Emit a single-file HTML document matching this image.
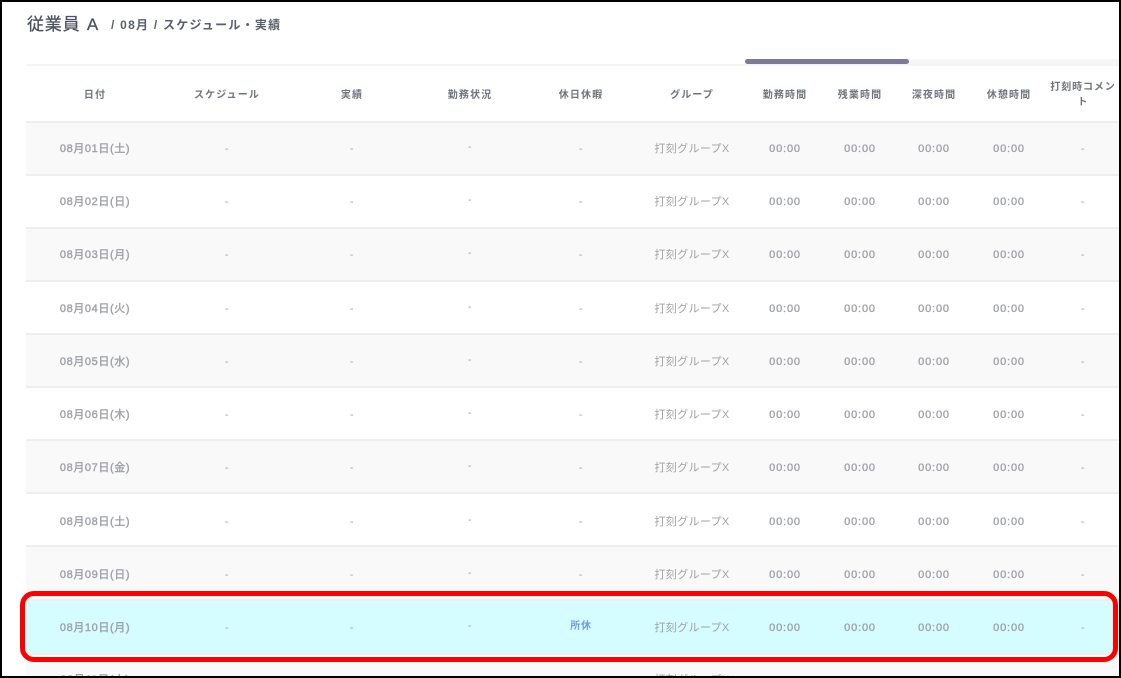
<!DOCTYPE html>
<html lang="ja">
<head>
<meta charset="utf-8">
<style>
html,body{margin:0;padding:0;background:#fff;}
#p{position:relative;width:1121px;height:678px;overflow:hidden;background:#fff;font-family:"Liberation Sans","Noto Sans CJK JP",sans-serif;}
#c{position:absolute;left:0;top:0;width:1121px;height:678px;overflow:hidden;filter:blur(.35px);}
.row{position:absolute;left:26px;width:1093px;height:51px;border-bottom:2px solid #eeeeee;}
.t{position:absolute;transform:translateX(-50%);white-space:nowrap;text-align:center;}
.h{font-size:10px;font-weight:700;color:#6f7480;letter-spacing:1.1px;line-height:14px;top:89px;}
.d{font-size:11px;color:#9fa2a7;line-height:14px;letter-spacing:.6px;margin-top:1px;}
.b{-webkit-text-stroke:.4px #9fa2a7;}
.g{letter-spacing:.35px;color:#a0a1a4;}
.m{letter-spacing:.85px;-webkit-text-stroke:.35px #9fa2a7;}
</style>
</head>
<body>
<div id="p">
<div id="c">
<div class="t" style="transform:none;top:14px;left:27px;font-size:17px;line-height:22px;color:#4c5160;letter-spacing:.8px;word-spacing:1px;-webkit-text-stroke:.25px #4c5160;">従業員 A</div>
<div class="t" style="transform:none;top:17px;left:111px;font-size:12px;line-height:16px;font-weight:700;color:#5a5f6c;letter-spacing:1.25px;">/ 08月 / スケジュール・実績</div>
<div style="position:absolute;left:26px;top:64px;width:1093px;height:2px;background:#f5f5f5;"></div>
<div style="position:absolute;left:745px;top:59px;width:374px;height:5px;background:#f6f6f6;"></div>
<div style="position:absolute;left:745px;top:59px;width:164px;height:5px;border-radius:3px;background:#7d7a99;"></div>
<div style="position:absolute;left:26px;top:121px;width:1093px;height:2px;background:#eeeeee;"></div>
<div class="t h" style="left:95px">日付</div>
<div class="t h" style="left:227px">スケジュール</div>
<div class="t h" style="left:352px">実績</div>
<div class="t h" style="left:470px">勤務状況</div>
<div class="t h" style="left:581px">休日休暇</div>
<div class="t h" style="left:692px">グループ</div>
<div class="t h" style="left:785px">勤務時間</div>
<div class="t h" style="left:860px">残業時間</div>
<div class="t h" style="left:934px">深夜時間</div>
<div class="t h" style="left:1009px">休憩時間</div>
<div class="t h" style="left:1083px;top:80px;width:68px;white-space:normal;line-height:15px;letter-spacing:.9px;">打刻時コメント</div>

<div class="row" style="top:123px;background:#f9f9f9"></div>
<div class="row" style="top:176px;background:#fff"></div>
<div class="row" style="top:229px;background:#f9f9f9"></div>
<div class="row" style="top:282px;background:#fff"></div>
<div class="row" style="top:335px;background:#f9f9f9"></div>
<div class="row" style="top:388px;background:#fff"></div>
<div class="row" style="top:441px;background:#f9f9f9"></div>
<div class="row" style="top:494px;background:#fff"></div>
<div class="row" style="top:547px;background:#f9f9f9;height:52px"></div>
<div class="row" style="top:601px;background:#d5fcff;height:52px"></div>

<div class="t d b" style="left:95px;top:141px">08月01日(土)</div><div class="t d" style="left:227px;top:141px">-</div><div class="t d" style="left:352px;top:141px">-</div><div class="t d" style="left:470px;top:139px">-</div><div class="t d" style="left:581px;top:141px">-</div><div class="t d g" style="left:692px;top:141px">打刻グループX</div><div class="t d m" style="left:785px;top:141px">00:00</div><div class="t d m" style="left:860px;top:141px">00:00</div><div class="t d m" style="left:934px;top:141px">00:00</div><div class="t d m" style="left:1009px;top:141px">00:00</div><div class="t d" style="left:1083px;top:141px">-</div>
<div class="t d b" style="left:95px;top:194px">08月02日(日)</div><div class="t d" style="left:227px;top:194px">-</div><div class="t d" style="left:352px;top:194px">-</div><div class="t d" style="left:470px;top:192px">-</div><div class="t d" style="left:581px;top:194px">-</div><div class="t d g" style="left:692px;top:194px">打刻グループX</div><div class="t d m" style="left:785px;top:194px">00:00</div><div class="t d m" style="left:860px;top:194px">00:00</div><div class="t d m" style="left:934px;top:194px">00:00</div><div class="t d m" style="left:1009px;top:194px">00:00</div><div class="t d" style="left:1083px;top:194px">-</div>
<div class="t d b" style="left:95px;top:247px">08月03日(月)</div><div class="t d" style="left:227px;top:247px">-</div><div class="t d" style="left:352px;top:247px">-</div><div class="t d" style="left:470px;top:245px">-</div><div class="t d" style="left:581px;top:247px">-</div><div class="t d g" style="left:692px;top:247px">打刻グループX</div><div class="t d m" style="left:785px;top:247px">00:00</div><div class="t d m" style="left:860px;top:247px">00:00</div><div class="t d m" style="left:934px;top:247px">00:00</div><div class="t d m" style="left:1009px;top:247px">00:00</div><div class="t d" style="left:1083px;top:247px">-</div>
<div class="t d b" style="left:95px;top:301px">08月04日(火)</div><div class="t d" style="left:227px;top:301px">-</div><div class="t d" style="left:352px;top:301px">-</div><div class="t d" style="left:470px;top:299px">-</div><div class="t d" style="left:581px;top:301px">-</div><div class="t d g" style="left:692px;top:301px">打刻グループX</div><div class="t d m" style="left:785px;top:301px">00:00</div><div class="t d m" style="left:860px;top:301px">00:00</div><div class="t d m" style="left:934px;top:301px">00:00</div><div class="t d m" style="left:1009px;top:301px">00:00</div><div class="t d" style="left:1083px;top:301px">-</div>
<div class="t d b" style="left:95px;top:354px">08月05日(水)</div><div class="t d" style="left:227px;top:354px">-</div><div class="t d" style="left:352px;top:354px">-</div><div class="t d" style="left:470px;top:352px">-</div><div class="t d" style="left:581px;top:354px">-</div><div class="t d g" style="left:692px;top:354px">打刻グループX</div><div class="t d m" style="left:785px;top:354px">00:00</div><div class="t d m" style="left:860px;top:354px">00:00</div><div class="t d m" style="left:934px;top:354px">00:00</div><div class="t d m" style="left:1009px;top:354px">00:00</div><div class="t d" style="left:1083px;top:354px">-</div>
<div class="t d b" style="left:95px;top:407px">08月06日(木)</div><div class="t d" style="left:227px;top:407px">-</div><div class="t d" style="left:352px;top:407px">-</div><div class="t d" style="left:470px;top:405px">-</div><div class="t d" style="left:581px;top:407px">-</div><div class="t d g" style="left:692px;top:407px">打刻グループX</div><div class="t d m" style="left:785px;top:407px">00:00</div><div class="t d m" style="left:860px;top:407px">00:00</div><div class="t d m" style="left:934px;top:407px">00:00</div><div class="t d m" style="left:1009px;top:407px">00:00</div><div class="t d" style="left:1083px;top:407px">-</div>
<div class="t d b" style="left:95px;top:460px">08月07日(金)</div><div class="t d" style="left:227px;top:460px">-</div><div class="t d" style="left:352px;top:460px">-</div><div class="t d" style="left:470px;top:458px">-</div><div class="t d" style="left:581px;top:460px">-</div><div class="t d g" style="left:692px;top:460px">打刻グループX</div><div class="t d m" style="left:785px;top:460px">00:00</div><div class="t d m" style="left:860px;top:460px">00:00</div><div class="t d m" style="left:934px;top:460px">00:00</div><div class="t d m" style="left:1009px;top:460px">00:00</div><div class="t d" style="left:1083px;top:460px">-</div>
<div class="t d b" style="left:95px;top:514px">08月08日(土)</div><div class="t d" style="left:227px;top:514px">-</div><div class="t d" style="left:352px;top:514px">-</div><div class="t d" style="left:470px;top:512px">-</div><div class="t d" style="left:581px;top:514px">-</div><div class="t d g" style="left:692px;top:514px">打刻グループX</div><div class="t d m" style="left:785px;top:514px">00:00</div><div class="t d m" style="left:860px;top:514px">00:00</div><div class="t d m" style="left:934px;top:514px">00:00</div><div class="t d m" style="left:1009px;top:514px">00:00</div><div class="t d" style="left:1083px;top:514px">-</div>
<div class="t d b" style="left:95px;top:567px">08月09日(日)</div><div class="t d" style="left:227px;top:567px">-</div><div class="t d" style="left:352px;top:567px">-</div><div class="t d" style="left:470px;top:565px">-</div><div class="t d" style="left:581px;top:567px">-</div><div class="t d g" style="left:692px;top:567px">打刻グループX</div><div class="t d m" style="left:785px;top:567px">00:00</div><div class="t d m" style="left:860px;top:567px">00:00</div><div class="t d m" style="left:934px;top:567px">00:00</div><div class="t d m" style="left:1009px;top:567px">00:00</div><div class="t d" style="left:1083px;top:567px">-</div>
<div class="t d b" style="left:95px;top:620px">08月10日(月)</div><div class="t d" style="left:227px;top:620px">-</div><div class="t d" style="left:352px;top:620px">-</div><div class="t d" style="left:470px;top:618px">-</div><div class="t d" style="left:581px;top:619px;font-size:10px;font-weight:700;letter-spacing:.8px;color:#6f9be8">所休</div><div class="t d g" style="left:692px;top:620px">打刻グループX</div><div class="t d m" style="left:785px;top:620px">00:00</div><div class="t d m" style="left:860px;top:620px">00:00</div><div class="t d m" style="left:934px;top:620px">00:00</div><div class="t d m" style="left:1009px;top:620px">00:00</div><div class="t d" style="left:1083px;top:620px">-</div>

<div style="position:absolute;left:26px;top:662px;width:1093px;height:14px;background:#f9f9f9;overflow:hidden;">
<div class="t d b" style="left:69px;top:10px">08月11日(火)</div>
<div class="t d g" style="left:666px;top:10px">打刻グループX</div>
</div>
</div>

<div style="position:absolute;box-sizing:border-box;left:20px;top:591px;width:1098px;height:71px;border:5px solid #ff0000;border-radius:14px;"></div>
<div style="position:absolute;left:0;top:0;width:1121px;height:2px;background:#000;"></div>
<div style="position:absolute;left:0;top:0;width:2px;height:678px;background:#000;"></div>
<div style="position:absolute;left:1119px;top:0;width:2px;height:678px;background:#000;"></div>
<div style="position:absolute;left:0;top:676px;width:1121px;height:2px;background:#000;"></div>
</div>
</body>
</html>
